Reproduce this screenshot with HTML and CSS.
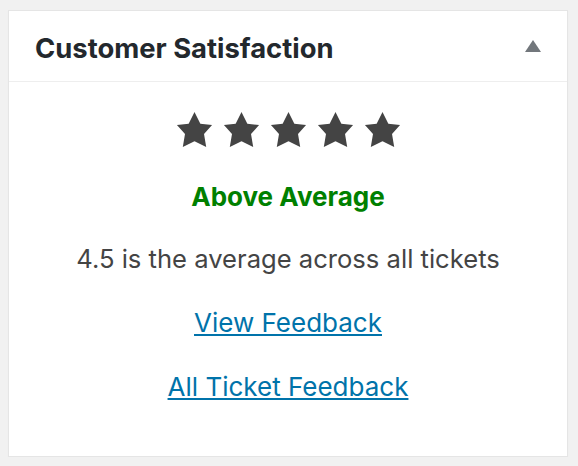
FILE: index.html
```html
<!DOCTYPE html>
<html>
<head>
<meta charset="utf-8">
<link rel="stylesheet" href="styles.css">
</head>
<body>
<div class="postbox">
  <div class="postbox-header">
    <h2 class="postbox-title">Customer Satisfaction</h2>
    <span class="toggle-arrow" aria-hidden="true"></span>
  </div>
  <div class="postbox-inside">
    <div class="stars">
      <svg class="star" viewBox="0 0 20 20"><path d="M10 1l3 6 6 .75-4.12 4.62L16 19l-6-3-6 3 1.13-6.63L1 7.75 7 7z"/></svg>
      <svg class="star" viewBox="0 0 20 20"><path d="M10 1l3 6 6 .75-4.12 4.62L16 19l-6-3-6 3 1.13-6.63L1 7.75 7 7z"/></svg>
      <svg class="star" viewBox="0 0 20 20"><path d="M10 1l3 6 6 .75-4.12 4.62L16 19l-6-3-6 3 1.13-6.63L1 7.75 7 7z"/></svg>
      <svg class="star" viewBox="0 0 20 20"><path d="M10 1l3 6 6 .75-4.12 4.62L16 19l-6-3-6 3 1.13-6.63L1 7.75 7 7z"/></svg>
      <svg class="star" viewBox="0 0 20 20"><path d="M10 1l3 6 6 .75-4.12 4.62L16 19l-6-3-6 3 1.13-6.63L1 7.75 7 7z"/></svg>
    </div>
    <p class="rating-label">Above Average</p>
    <p class="rating-text">4.5 is the average across all tickets</p>
    <p class="rating-link"><a href="#">View Feedback</a></p>
    <p class="rating-link"><a href="#">All Ticket Feedback</a></p>
  </div>
</div>
</body>
</html>
```

FILE: styles.css
```css
html, body {
  margin: 0;
  padding: 0;
}
body {
  background: #f1f1f1;
  font-family: Inter, Roboto, "Liberation Sans", sans-serif;
  padding: 10px 10px 0 8px;
}
.postbox {
  width: 558px;
  height: 445px;
  background: #fff;
  border: 1px solid #e5e5e5;
  box-shadow: 0 1px 1px rgba(0, 0, 0, 0.04);
  display: flex;
  flex-direction: column;
}
.postbox-header {
  height: 71px;
  border-bottom: 1px solid #eeeeee;
  display: flex;
  align-items: center;
  justify-content: space-between;
  padding: 0 26px 0 26px;
  box-sizing: border-box;
  flex: none;
}
.postbox-title {
  margin: 0;
  font-size: 27.4px;
  font-weight: 700;
  color: #23282d;
  line-height: 1;
  padding-top: 5px;
}
.toggle-arrow {
  width: 0;
  height: 0;
  border-left: 8px solid transparent;
  border-right: 8px solid transparent;
  border-bottom: 12px solid #72777c;
}
.postbox-inside {
  padding-top: 28px;
  text-align: center;
}
.stars {
  display: flex;
  justify-content: center;
  gap: 8px;
  height: 39px;
}
.star {
  width: 39px;
  height: 39px;
  fill: #444;
}
.rating-label {
  margin: 0;
  padding-top: 30px;
  font-size: 26px;
  font-weight: 700;
  color: #008000;
  line-height: 36px;
}
.rating-text {
  margin: 0;
  padding-top: 26px;
  font-size: 25.6px;
  color: #444;
  line-height: 36px;
}
.rating-link {
  margin: 0;
  padding-top: 28px;
  font-size: 26px;
  line-height: 36px;
}
.rating-link a {
  color: #0073aa;
  text-decoration: underline;
}
```
